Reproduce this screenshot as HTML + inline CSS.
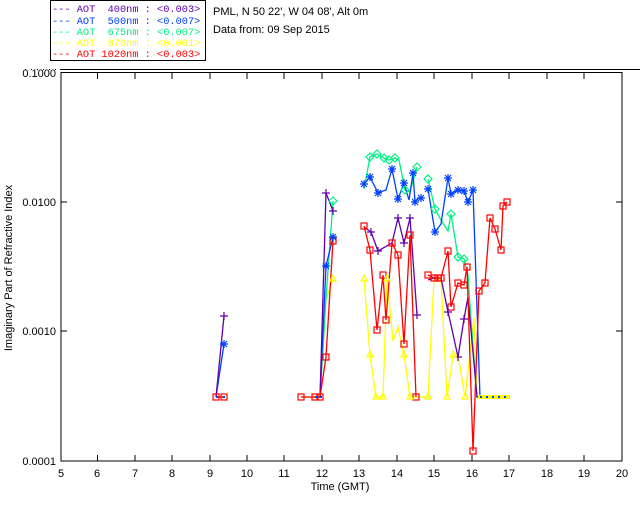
<!DOCTYPE html>
<html><head><style>body{margin:0;background:#fff}svg{display:block}text{font-family:"Liberation Sans",sans-serif;font-size:11px}text.m{font-family:"Liberation Mono",monospace;font-size:10.3px;white-space:pre}</style></head><body>
<svg width="640" height="512" xmlns="http://www.w3.org/2000/svg">
<rect width="640" height="512" fill="#fff"/>
<rect x="50.5" y="0.5" width="155" height="60" fill="none" stroke="#000"/>
<text class="m" x="52" y="12" fill="#6000b0" xml:space="preserve">--- AOT  400nm : &lt;0.003&gt;</text>
<text class="m" x="52" y="24" fill="#0040ff" xml:space="preserve">--- AOT  500nm : &lt;0.007&gt;</text>
<text class="m" x="52" y="35" fill="#00f080" xml:space="preserve">--- AOT  675nm : &lt;0.007&gt;</text>
<text class="m" x="52" y="46" fill="#ffff00" xml:space="preserve">--- AOT  870nm : &lt;0.001&gt;</text>
<text class="m" x="52" y="57" fill="#ff0000" xml:space="preserve">--- AOT 1020nm : &lt;0.003&gt;</text>
<text x="213" y="15" fill="#000">PML, N 50 22', W 04 08', Alt 0m</text>
<text x="213" y="33" fill="#000">Data from: 09 Sep 2015</text>
<line x1="25" y1="69.5" x2="58" y2="69.5" stroke="#000" stroke-dasharray="1,5"/>
<line x1="60" y1="69.5" x2="640" y2="69.5" stroke="#000"/>
<rect x="61" y="72.5" width="561" height="388.5" fill="none" stroke="#000"/>
<g stroke="#000">
<path d="M97.5 461v-6M135 461v-6M172 461v-6M210 461v-6M247 461v-6M284 461v-6M322 461v-6M359 461v-6M397 461v-6M434 461v-6M472 461v-6M509 461v-6M547 461v-6M584 461v-6M97.5 73v6M135 73v6M172 73v6M210 73v6M247 73v6M284 73v6M322 73v6M359 73v6M397 73v6M434 73v6M472 73v6M509 73v6M547 73v6M584 73v6M61 202h6M61 331h6M622 202h-6M622 331h-6"/>
</g>
<g text-anchor="end"><text x="56" y="77">0.1000</text><text x="56" y="206">0.0100</text><text x="56" y="335">0.0010</text><text x="56" y="465">0.0001</text></g>
<g text-anchor="middle"><text x="61" y="477">5</text><text x="97" y="477">6</text><text x="135" y="477">7</text><text x="172" y="477">8</text><text x="210" y="477">9</text><text x="247" y="477">10</text><text x="284" y="477">11</text><text x="322" y="477">12</text><text x="359" y="477">13</text><text x="397" y="477">14</text><text x="434" y="477">15</text><text x="472" y="477">16</text><text x="509" y="477">17</text><text x="547" y="477">18</text><text x="584" y="477">19</text><text x="622" y="477">20</text>
<text x="340" y="490">Time (GMT)</text>
<text transform="translate(12,268) rotate(-90)">Imaginary Part of Refractive Index</text></g>
<g fill="none" stroke-width="1.3">
<polyline stroke="#ffff00" points="216,397 224,397"/>
<polyline stroke="#ffff00" points="301,397 315,397 320,397 326,300 333,279"/>
<polyline stroke="#ffff00" points="364,279 370,355 376,397 383,397 387,279 393,341 398,327 404,355 410,397 416,397 428,397 434,279 441,279 447,397 453,355 458,355 465,397 474,318 477,397 510,397"/>
<polyline stroke="#00f080" points="216,397 224,397"/>
<polyline stroke="#00f080" points="315,397 320,397 326,298 333,201"/>
<polyline stroke="#00f080" points="364,189 370,157 377,154 384,158 389,160 395,158 399,160 405,190 410,192 417,167"/>
<polyline stroke="#00f080" points="428,179 435,209 441,220 448,231 451,214 458,257 464,259 468,275 471,320 477,397 510,397"/>
<polyline stroke="#0040ff" points="216,397 224,344"/>
<polyline stroke="#0040ff" points="315,397 320,397 326,266 333,237"/>
<polyline stroke="#0040ff" points="364,184 370,177 378,193 383,191 386,190 392,169 398,199 404,183 409,200 413,173 415,202 418,198 421,198"/>
<polyline stroke="#0040ff" points="428,189 435,232 441,224 448,178 451,194 458,190 464,191 468,202 473,190 480,397 510,397"/>
<polyline stroke="#6000b0" points="216,397 224,316"/>
<polyline stroke="#6000b0" points="315,397 320,397 326,193 333,211"/>
<polyline stroke="#6000b0" points="364,227 371,232 378,251 392,243 398,218 404,243 410,218 417,315"/>
<polyline stroke="#6000b0" points="428,280 434,278 441,278 448,312 451,325 458,357 464,319 468,297 477,397 510,397"/>
<polyline stroke="#ff0000" points="216,397 224,397"/>
<polyline stroke="#ff0000" points="301,397 315,397 320,397 326,357 333,241"/>
<polyline stroke="#ff0000" points="364,226 370,250 377,330 383,275 386,320 392,243 398,255 404,344 410,235 416,397"/>
<polyline stroke="#ff0000" points="428,275 434,278 438,278 441,278 448,251 451,307 458,283 464,285 467,267 473,451 479,291 485,283 490,218 495,229 501,250 503,206 507,202"/>
</g>
<g fill="none" stroke="#ff0000" stroke-width="1.2">
<rect x="213" y="394" width="6" height="6"/><rect x="221" y="394" width="6" height="6"/><rect x="298" y="394" width="6" height="6"/><rect x="312" y="394" width="6" height="6"/><rect x="317" y="394" width="6" height="6"/><rect x="323" y="354" width="6" height="6"/><rect x="330" y="238" width="6" height="6"/>
<rect x="361" y="223" width="6" height="6"/><rect x="367" y="247" width="6" height="6"/><rect x="374" y="327" width="6" height="6"/><rect x="380" y="272" width="6" height="6"/><rect x="383" y="317" width="6" height="6"/><rect x="389" y="240" width="6" height="6"/><rect x="395" y="252" width="6" height="6"/><rect x="401" y="341" width="6" height="6"/><rect x="407" y="232" width="6" height="6"/><rect x="413" y="394" width="6" height="6"/>
<rect x="425" y="272" width="6" height="6"/><rect x="431" y="275" width="6" height="6"/><rect x="435" y="275" width="6" height="6"/><rect x="438" y="275" width="6" height="6"/><rect x="445" y="248" width="6" height="6"/><rect x="448" y="304" width="6" height="6"/><rect x="455" y="280" width="6" height="6"/><rect x="461" y="282" width="6" height="6"/><rect x="464" y="264" width="6" height="6"/><rect x="470" y="448" width="6" height="6"/><rect x="476" y="288" width="6" height="6"/><rect x="482" y="280" width="6" height="6"/><rect x="487" y="215" width="6" height="6"/><rect x="492" y="226" width="6" height="6"/><rect x="498" y="247" width="6" height="6"/><rect x="500" y="203" width="6" height="6"/><rect x="504" y="199" width="6" height="6"/>
</g>
<defs><path id="st" d="M-4 0h8M0-4v8M-3-3l6 6M-3 3l6-6"/></defs>
<g stroke="#0040ff" stroke-width="1.2">
<use href="#st" x="364" y="184"/><use href="#st" x="370" y="177"/><use href="#st" x="378" y="193"/><use href="#st" x="392" y="169"/><use href="#st" x="398" y="199"/><use href="#st" x="404" y="183"/><use href="#st" x="413" y="173"/><use href="#st" x="415" y="202"/><use href="#st" x="421" y="198"/><use href="#st" x="428" y="189"/><use href="#st" x="435" y="232"/><use href="#st" x="448" y="178"/><use href="#st" x="451" y="194"/><use href="#st" x="458" y="190"/><use href="#st" x="464" y="191"/><use href="#st" x="468" y="202"/><use href="#st" x="473" y="190"/><use href="#st" x="326" y="266"/><use href="#st" x="333" y="237"/><use href="#st" x="224" y="344"/>
</g>
<g stroke="#6000b0" stroke-width="1.2">
<path d="M322 193h8M326 189v8M329 211h8M333 207v8M367 232h8M371 228v8M374 251h8M378 247v8M394 218h8M398 214v8M400 243h8M404 239v8M406 218h8M410 214v8M413 315h8M417 311v8M444 312h8M448 308v8M454 357h8M458 353v8M460 319h8M464 315v8M220 316h8M224 312v8"/>
</g>
<g fill="none" stroke="#00f080" stroke-width="1.2">
<path d="M370 153l4 4-4 4-4-4zM377 150l4 4-4 4-4-4zM384 154l4 4-4 4-4-4zM389 156l4 4-4 4-4-4zM395 154l4 4-4 4-4-4zM405 186l4 4-4 4-4-4zM417 163l4 4-4 4-4-4zM428 175l4 4-4 4-4-4zM435 205l4 4-4 4-4-4zM451 210l4 4-4 4-4-4zM458 253l4 4-4 4-4-4zM464 255l4 4-4 4-4-4zM333 197l4 4-4 4-4-4z"/>
</g>
<g fill="none" stroke="#ffff00" stroke-width="1.2">
<path d="M364 275l3 6h-6zM370 351l3 6h-6zM376 393l3 6h-6zM383 393l3 6h-6zM387 275l3 6h-6zM404 351l3 6h-6zM410 393l3 6h-6zM428 393l3 6h-6zM447 393l3 6h-6zM453 351l3 6h-6zM465 393l3 6h-6zM333 275l3 6h-6z"/>
</g>
<g fill="#0040ff"><rect x="478" y="395" width="32" height="4" fill="#ffff00"/><path d="M480 396h2v2h-2zM486 396h2v2h-2zM492 396h2v2h-2zM498 396h2v2h-2zM504 396h2v2h-2zM216 396h2v2h-2zM223 396h2v2h-2zM315 396h2v2h-2zM320 396h2v2h-2z"/></g>
</svg>
</body></html>
